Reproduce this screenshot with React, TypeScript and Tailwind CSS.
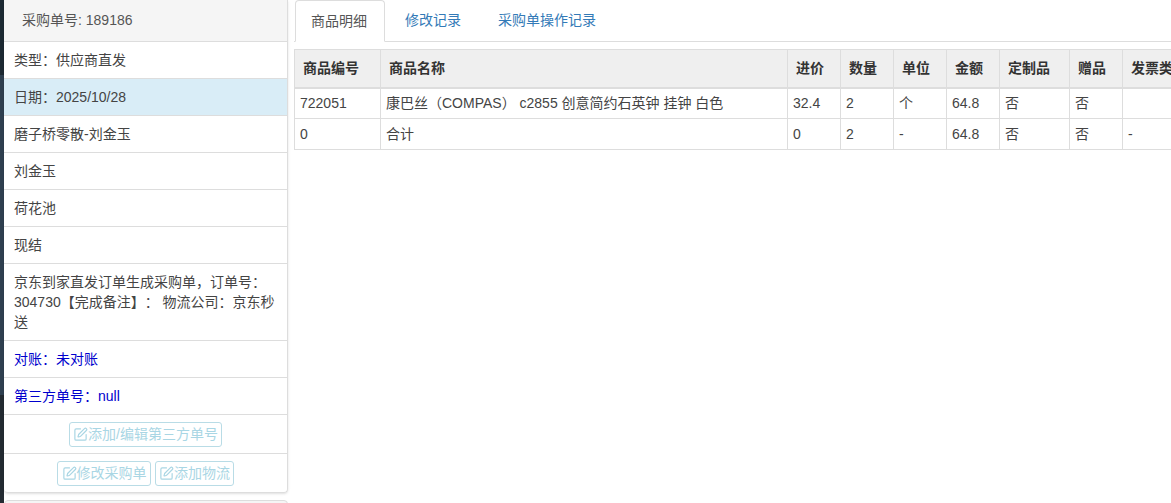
import { SquarePen } from 'lucide-react';

const FONT = "font-['Liberation_Sans','Noto_Sans_CJK_SC',sans-serif]";

const rows = ['磨子桥零散-刘金玉', '刘金玉', '荷花池', '现结'];

const columns = [
  { label: '商品编号', width: 'w-[86px]' },
  { label: '商品名称', width: 'w-[407px]' },
  { label: '进价', width: 'w-[53px]' },
  { label: '数量', width: 'w-[53px]' },
  { label: '单位', width: 'w-[53px]' },
  { label: '金额', width: 'w-[53px]' },
  { label: '定制品', width: 'w-[70px]' },
  { label: '赠品', width: 'w-[53px]' },
  { label: '发票类型', width: 'w-[90px]' },
];

const items = [
  ['722051', '康巴丝（COMPAS） c2855 创意简约石英钟 挂钟 白色', '32.4', '2', '个', '64.8', '否', '否', ''],
  ['0', '合计', '0', '2', '-', '64.8', '否', '否', '-'],
];

function Row({ children, className = '' }: { children: React.ReactNode; className?: string }) {
  return (
    <div className={`h-[37px] px-[10px] flex items-center border-b border-[#ddd] ${className}`}>
      {children}
    </div>
  );
}

function ActionButton({ label, className = '' }: { label: string; className?: string }) {
  return (
    <button
      disabled
      className={`h-[25px] flex items-center justify-center whitespace-nowrap rounded-[3px] border border-[#b9dce6] text-[#a9d6e4] text-[14px] ${className}`}
    >
      <SquarePen size={15} strokeWidth={1.9} className="shrink-0" />
      {label}
    </button>
  );
}

export default function App() {
  return (
    <div className={`${FONT} [text-spacing-trim:space-all] w-[1171px] h-[503px] overflow-hidden flex bg-white text-[14px] text-[#444]`}>
      {/* 左侧深色边 */}
      <div className="w-[4px] shrink-0 flex flex-col">
        <div className="h-[75px] bg-[#1d2a33]" />
        <div className="h-[320px] bg-[#2f4050]" />
        <div className="flex-1 bg-[#232b32]" />
      </div>

      {/* 采购单信息 */}
      <div className="w-[284px] shrink-0">
        <div className="rounded-b-[4px] border-r border-b border-[#ddd] shadow-sm">
          <div className="h-[42px] pl-[18px] flex items-center bg-[#f5f5f5] border-b border-[#ddd] text-[#555]">
            采购单号: 189186
          </div>
          <Row>类型：供应商直发</Row>
          <Row className="bg-[#d9edf7]">日期：2025/10/28</Row>
          {rows.map(r => <Row key={r}>{r}</Row>)}
          <div className="h-[77px] px-[10px] pt-[8px] leading-[20px] border-b border-[#ddd]">
            京东到家直发订单生成采购单，订单号：304730【完成备注】： 物流公司：京东秒送
          </div>
          <Row className="text-[#0000cd]">对账：未对账</Row>
          <Row className="text-[#0000cd]">第三方单号：null</Row>
          <div className="h-[39px] flex items-center justify-center border-b border-[#ddd]">
            <ActionButton label="添加/编辑第三方单号" className="w-[153px]" />
          </div>
          <div className="h-[38px] flex items-center justify-center gap-[4px]">
            <ActionButton label="修改采购单" className="w-[94px]" />
            <ActionButton label="添加物流" className="w-[79px]" />
          </div>
        </div>
        <div className="mt-[7px] h-[10px] rounded-t-[4px] border border-[#ddd] bg-[#f5f5f5]" />
      </div>

      {/* 右侧内容 */}
      <div className="flex-1 min-w-0 pl-[6px] overflow-hidden">
        <div className="h-[42px] flex border-b border-[#ddd] pl-[1px]">
          <div className="h-[42px] px-[15px] flex items-center border border-[#ddd] border-b-white rounded-t-[4px] bg-white text-[#555] mr-[4px] w-[90px]">
            商品明细
          </div>
          <div className="h-[41px] px-[16px] flex items-center text-[#337ab7] mr-[5px]">修改记录</div>
          <div className="h-[41px] px-[16px] flex items-center text-[#337ab7]">采购单操作记录</div>
        </div>

        <table className="mt-[7px] table-fixed border-collapse w-[918px]">
          <thead>
            <tr className="bg-[#efefef]">
              {columns.map(c => (
                <th
                  key={c.label}
                  className={`${c.width} h-[38px] px-[8px] text-left font-bold text-[#333] whitespace-nowrap overflow-hidden border border-b-2 border-[#ddd]`}
                >
                  {c.label}
                </th>
              ))}
            </tr>
          </thead>
          <tbody>
            {items.map(row => (
              <tr key={row[0]}>
                {row.map((cell, i) => (
                  <td key={i} className="h-[31px] px-[5px] whitespace-nowrap border border-[#ddd]">
                    {cell}
                  </td>
                ))}
              </tr>
            ))}
          </tbody>
        </table>
      </div>
    </div>
  );
}
